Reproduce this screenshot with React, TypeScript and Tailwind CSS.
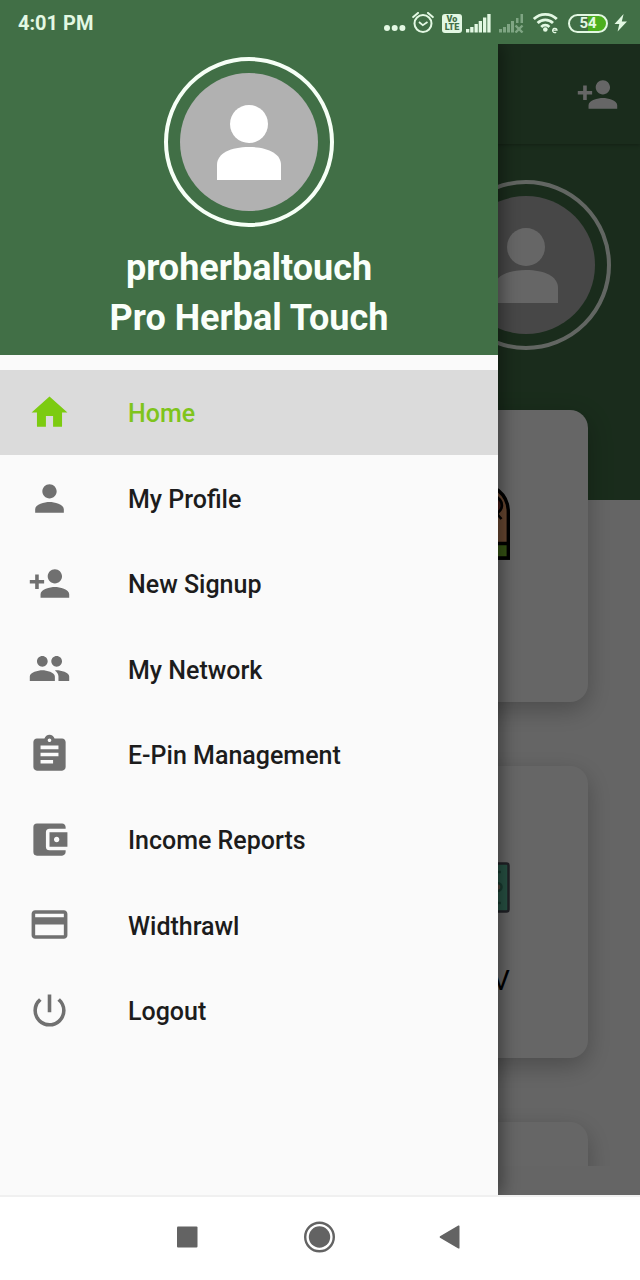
import React from 'react';
import {
  MdAccountBalanceWallet,
  MdAssignment,
  MdHome,
  MdPayment,
  MdPeople,
  MdPerson,
  MdPersonAdd,
  MdPowerSettingsNew,
} from 'react-icons/md';
import type { IconType } from 'react-icons';
import clsx from 'clsx';

interface MenuItem {
  label: string;
  icon: IconType;
  active?: boolean;
}

const MENU: MenuItem[] = [
  { label: 'Home', icon: MdHome, active: true },
  { label: 'My Profile', icon: MdPerson },
  { label: 'New Signup', icon: MdPersonAdd },
  { label: 'My Network', icon: MdPeople },
  { label: 'E-Pin Management', icon: MdAssignment },
  { label: 'Income Reports', icon: MdAccountBalanceWallet },
  { label: 'Widthrawl', icon: MdPayment },
  { label: 'Logout', icon: MdPowerSettingsNew },
];

function Avatar() {
  return (
    <div className="w-[170px] h-[170px] shrink-0 rounded-full border-4 border-[#f6fff6] flex items-center justify-center">
      <svg className="w-[138px] h-[138px]" viewBox="0 0 138 138">
        <circle cx="69" cy="69" r="69" fill="#b1b1b1" />
        <circle cx="69" cy="51" r="19" fill="#fff" />
        <path d="M37 107V92c0-12 14-18 32-18s32 6 32 18v15z" fill="#fff" />
      </svg>
    </div>
  );
}

function SignalBars() {
  return (
    <svg className="w-[26px] h-5" viewBox="0 0 26 20" fill="#e3f8e3">
      <rect x="0" y="16" width="3.300" height="3.500" />
      <rect x="4.200" y="14" width="3.300" height="5.500" />
      <rect x="8.500" y="11" width="3.300" height="8.500" />
      <rect x="12.700" y="8" width="3.300" height="11.500" />
      <rect x="17" y="4.500" width="3.300" height="15" />
      <rect x="21.300" y="1" width="3.300" height="18.500" />
    </svg>
  );
}

function NoSignalBars() {
  return (
    <svg className="w-7 h-5" viewBox="0 0 28 20" fill="#7fa583">
      <rect x="1" y="16" width="3" height="3.500" />
      <rect x="5" y="14" width="3" height="5.500" />
      <rect x="9" y="11" width="3" height="8.500" />
      <rect x="13" y="8" width="3" height="11.500" />
      <rect x="18" y="5" width="2.500" height="5" />
      <rect x="22.500" y="1" width="2.500" height="9" />
      <path d="M17.500 12.500l7 7M24.500 12.500l-7 7" stroke="#7fa583" strokeWidth="2.400" />
    </svg>
  );
}

function StatusBar() {
  return (
    <header className="h-11 shrink-0 bg-[#416f46] flex items-center justify-between pt-0.5 pl-[18px] pr-3 text-[#e3f8e3]">
      <span className="text-xl font-bold">4:01 PM</span>
      <div className="flex items-center gap-1.5">
        <svg className="w-[22px] h-5" viewBox="0 0 22 20" fill="currentColor">
          <circle cx="3" cy="15" r="3" />
          <circle cx="10.700" cy="15" r="3" />
          <circle cx="18.400" cy="15" r="3" />
        </svg>
        {/* Alarm */}
        <svg className="w-6 h-[22px]" viewBox="0 0 24 22" fill="none" stroke="currentColor" strokeWidth="2">
          <circle cx="11" cy="11.500" r="8.500" />
          <path d="M1.200 5.100L6 .9M20.800 5.100L16 .9" strokeLinecap="round" />
          <path d="M7 10l3.800 3.200L15.500 10" strokeWidth="1.800" />
        </svg>
        <div className="flex items-center gap-1">
          <div className="w-5 h-[19px] rounded-[3px] bg-[#e3f8e3] text-[#416f46] flex flex-col items-center justify-center text-[9px] leading-[8px] font-black">
            <span>Vo</span>
            <span>LTE</span>
          </div>
          <SignalBars />
        </div>
        <NoSignalBars />
        {/* Wifi */}
        <svg className="w-[30px] h-[22px]" viewBox="0 0 30 22" fill="none" stroke="currentColor" strokeWidth="2.800">
          <path d="M1.800 7.100a16.300 16.300 0 0 1 23 0" />
          <path d="M5.600 11.100a11 11 0 0 1 15.400 0" />
          <path d="M9.200 14.900a5.800 5.800 0 0 1 8.200 0" />
          <circle cx="13.300" cy="17.500" r="2.300" fill="currentColor" stroke="none" />
          <path d="M20.800 18.200h4.200a2.200 2.200 0 1 0-.8 2" strokeWidth="1.300" />
        </svg>
        <div className="w-10 h-[19px] rounded-full border-2 border-[#e3f8e3] bg-linear-to-r from-[#416f46] from-50% to-[#4caf1e] to-50% flex items-center justify-center text-[15px] leading-none font-bold">
          54
        </div>
        <svg className="w-3.5 h-[18px]" viewBox="0 0 14 18" fill="currentColor">
          <path d="M9.600 0L.5 10h4.800L3.600 17.500 13 7.400H7.800z" />
        </svg>
      </div>
    </header>
  );
}

function ShopIcon() {
  return (
    <svg className="w-20 h-20" viewBox="0 0 80 80" stroke="#000" strokeWidth="3.400">
      <path d="M1.700 78V30C1.700 14 18 2 40 2c25 0 38.300 13 38.300 30v46z" fill="#ffae78" />
      <path d="M1.700 63.500h76.600V78H1.700z" fill="#86cc33" />
      <path d="M64 15c7 4 9 8 7.500 13-1.500 4-5 6-9 6" fill="#b0483a" strokeWidth="2.600" />
      <path d="M67 34l4.500 5" fill="none" strokeWidth="2.600" />
    </svg>
  );
}

function CashIcon() {
  return (
    <svg className="w-20 h-20" viewBox="0 0 80 80" stroke="#51535f" strokeWidth="2.500">
      <rect x="1.500" y="27.500" width="77" height="48" rx="2" fill="#62cba9" />
      <path d="M12 36h59M12 67h59" fill="none" stroke="#3d8f76" />
      <circle cx="40" cy="51" r="12" fill="#e8c09a" />
      <circle cx="67.500" cy="51" r="4" fill="#c9a58c" stroke="#3d8f76" />
    </svg>
  );
}

function Card({ children }: { children?: React.ReactNode }) {
  return (
    <div className="h-[292px] rounded-[18px] bg-white shadow-[0_8px_24px_rgba(0,0,0,0.25)] pt-[70px] flex flex-col items-center gap-12 text-[28px] leading-[34px] text-black">
      {children}
    </div>
  );
}

function HomeScreen() {
  return (
    <div className="h-full flex flex-col bg-[#fdfdfd] pb-[29px]">
      <div className="h-[100px] shrink-0 z-10 bg-[#416f46] shadow-[0_1px_4px_rgba(0,0,0,0.3)] flex items-center justify-end pr-[21px]">
        <button type="button" aria-label="New Signup">
          <MdPersonAdd className="w-[43px] h-[43px] text-white" />
        </button>
      </div>
      <div className="flex-1 min-h-0 overflow-hidden">
        <div className="h-[356px] bg-[#416f46] pt-9 pr-[29px] flex justify-end items-start">
          <Avatar />
        </div>
        <div className="-mt-[90px] px-[52px] grid grid-cols-2 gap-16">
          <Card />
          <Card>
            <ShopIcon />
          </Card>
          <Card />
          <Card>
            <CashIcon />
            <span>My BV</span>
          </Card>
          <Card />
          <Card />
        </div>
      </div>
    </div>
  );
}

function Drawer() {
  return (
    <aside className="absolute inset-y-0 left-0 w-[498px] max-w-[80%] bg-[#fafafa] shadow-[4px_0_16px_rgba(0,0,0,0.4)]">
      <div className="bg-[#416f46] text-[#fafffa] h-[311px] pt-[13px] flex flex-col items-center">
        <Avatar />
        <div className="mt-4 text-center text-[36px] leading-[50px] font-bold">
          <p>proherbaltouch</p>
          <p>Pro Herbal Touch</p>
        </div>
      </div>
      <nav className="mt-[15px] h-[683px] grid auto-rows-fr">
        {MENU.map(({ label, icon: Icon, active }) => (
          <a
            key={label}
            href="#"
            className={clsx(
              'flex items-center pl-7 gap-[57px] text-[25px] font-medium',
              active ? 'bg-[#dbdbdb] text-[#7fc41c]' : 'text-[#1c1c1c]'
            )}
          >
            <Icon className={clsx('w-[43px] h-[43px]', active ? 'text-[#7ccb10]' : 'text-[#707070]')} />
            <span className="pt-[3px]">{label}</span>
          </a>
        ))}
      </nav>
    </aside>
  );
}

function NavigationBar() {
  return (
    <footer className="h-[85px] shrink-0 bg-white border-t-2 border-[#f0f0f0] pb-[3px] flex items-center justify-center text-[#636363]">
      <button type="button" aria-label="Recent apps" className="w-[131px] flex justify-center">
        <svg className="w-8 h-8" viewBox="0 0 32 32" fill="currentColor">
          <rect x="4" y="5.500" width="20.500" height="21" rx="1" />
        </svg>
      </button>
      <button type="button" aria-label="Home" className="w-[131px] flex justify-center">
        <svg className="w-8 h-8" viewBox="0 0 32 32" fill="currentColor">
          <circle cx="15.500" cy="16" r="14.300" fill="none" stroke="currentColor" strokeWidth="2.400" />
          <circle cx="15.500" cy="16" r="10.700" />
        </svg>
      </button>
      <button type="button" aria-label="Back" className="w-[131px] flex justify-center">
        <svg className="w-8 h-8" viewBox="0 0 32 32" fill="currentColor">
          <path d="M5 15.200L23.300 4.600q1.200-.6 1.200.7v21.400q0 1.300-1.200.7L5 16.800q-.8-.8 0-1.600z" />
        </svg>
      </button>
    </footer>
  );
}

export default function App() {
  return (
    <div className="h-screen flex flex-col font-['Roboto',sans-serif]">
      <StatusBar />
      <main className="relative flex-1 min-h-0 overflow-hidden">
        <HomeScreen />
        {/* Scrim */}
        <div className="absolute inset-0 z-20 bg-black/60"></div>
        <div className="absolute inset-0 z-30">
          <Drawer />
        </div>
      </main>
      <NavigationBar />
    </div>
  );
}
